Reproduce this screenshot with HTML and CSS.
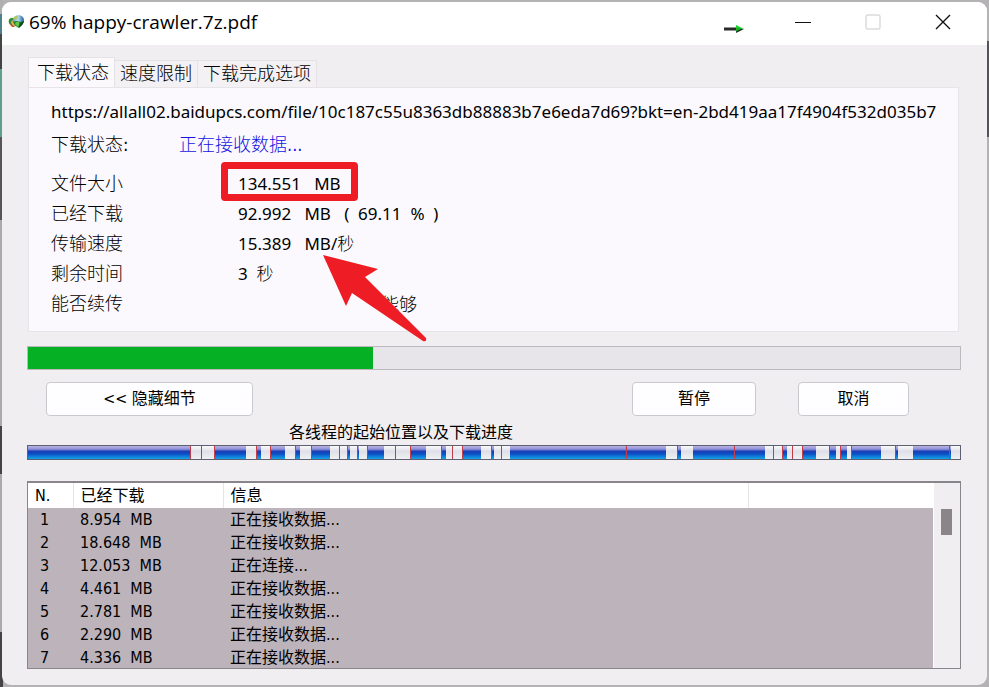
FILE: index.html
```html
<!DOCTYPE html>
<html lang="zh-CN">
<head>
<meta charset="utf-8">
<title>69% happy-crawler.7z.pdf</title>
<link rel="stylesheet" href="styles.css">
</head>
<body>
<main class="window">
  <header class="titlebar">
    <svg class="app-icon" viewBox="0 0 16 16" aria-hidden="true">
      <defs>
        <linearGradient id="globe" x1="0" y1="0" x2="1" y2="0">
          <stop offset="0" stop-color="#5f9fd8"/>
          <stop offset="0.45" stop-color="#b9dcf2"/>
          <stop offset="1" stop-color="#1e5a9c"/>
        </linearGradient>
      </defs>
      <ellipse cx="5" cy="8.500" rx="4.500" ry="3.500" fill="#8a9a4c" transform="rotate(35 5 8.500)"/>
      <path d="M1 8Q0 5 3 4Q5 3 6 5L3 7Q3 10 6 12Q2 12 1 8Z" fill="#2f8f3a"/>
      <path d="M3 8L6 6L8 9L7 12Q4 12 3 8Z" fill="#e6b04e"/>
      <path d="M1 9L4 11L7 13L4 13Z" fill="#c8521d"/>
      <circle cx="10.500" cy="6.500" r="5.500" fill="url(#globe)"/>
      <path d="M5 5Q6 2 9 1.500L10 3L8 6Z" fill="#b5c45a"/>
      <path d="M5 7.500L9 7L12 8L16 7Q15 11 10.500 14Q6 11 5 7.500Z" fill="#237f2c"/>
      <path d="M8 8H11V11L10 13L7 10Z" fill="#5fc94e"/>
      <path d="M13 8L16 7Q15 11 11 14L11.500 11Z" fill="#114a1c"/>
    </svg>
    <h1 class="title">69% happy-crawler.7z.pdf</h1>
    <svg class="drop-arrow" viewBox="0 0 20 10" aria-hidden="true">
      <path d="M0 3.500H13V6.500H0Z" fill="#2a2a2a"/>
      <path d="M12 1L20 5H12Z" fill="#19d326"/>
      <path d="M12 4H17L12 8Z" fill="#19b326"/>
      <path d="M20 5L12 9V7.500L16 5Z" fill="#143617"/>
    </svg>
    <button class="caption" type="button" aria-label="最小化"><svg viewBox="0 0 16 16"><path d="M0 8.500H16" stroke="#111"/></svg></button>
    <button class="caption" type="button" aria-label="最大化" disabled><svg viewBox="0 0 16 16"><rect x="1" y="1" width="14" height="14" rx="1" fill="none" stroke="#c9c9c9"/></svg></button>
    <button class="caption" type="button" aria-label="关闭"><svg viewBox="0 0 16 16"><path d="M1 1L15 15M15 1L1 15" stroke="#111" stroke-width="1.400"/></svg></button>
  </header>

  <div class="content">
    <div class="tabs" role="tablist">
      <button class="tab tab-active" type="button" role="tab" aria-selected="true">下载状态</button>
      <button class="tab" type="button" role="tab" aria-selected="false">速度限制</button>
      <button class="tab" type="button" role="tab" aria-selected="false">下载完成选项</button>
    </div>

    <section class="panel" role="tabpanel">
      <p class="url">https://allall02.baidupcs.com/file/10c187c55u8363db88883b7e6eda7d69?bkt=en-2bd419aa17f4904f532d035b7</p>
      <p class="status"><span class="status-label">下载状态:</span><span class="status-value">正在接收数据...</span></p>
      <dl class="details">
        <dt>文件大小</dt><dd>134.551&nbsp;&nbsp; MB<span class="frame"></span></dd>
        <dt>已经下载</dt><dd>92.992&nbsp;&nbsp; MB&nbsp;&nbsp; (&nbsp; 69.11&nbsp; %&nbsp; )</dd>
        <dt>传输速度</dt><dd>15.389&nbsp;&nbsp; MB/<span class="unit">秒</span></dd>
        <dt>剩余时间</dt><dd>3&nbsp; <span class="unit">秒</span></dd>
        <dt>能否续传</dt><dd class="resume">能够</dd>
      </dl>
      <svg class="pointer" viewBox="0 0 104 88" aria-hidden="true">
        <path d="M0 0L55 14L42 22L103 83Q104 87 100 86L29 38L23 51Z" fill="#ee1c24"/>
      </svg>
    </section>

    <div class="progress" role="progressbar" aria-label="下载进度" aria-valuenow="69"><div class="progress-fill"></div></div>

    <div class="actions">
      <button class="button button-details" type="button">&lt;&lt; 隐藏细节</button>
      <button class="button button-pause" type="button">暂停</button>
      <button class="button button-cancel" type="button">取消</button>
    </div>

    <p class="threads-label">各线程的起始位置以及下载进度</p>
    <svg class="threads" viewBox="28 0 932 13" preserveAspectRatio="none" shape-rendering="crispEdges" aria-hidden="true">
      <defs>
        <linearGradient id="done" x1="0" y1="0" x2="0" y2="1">
          <stop offset="0" stop-color="#b9b2e2"/>
          <stop offset="0.25" stop-color="#8e90da"/>
          <stop offset="0.4" stop-color="#1b3cb4"/>
          <stop offset="0.6" stop-color="#0b4fc4"/>
          <stop offset="1" stop-color="#15a4ea"/>
        </linearGradient>
        <linearGradient id="empty" x1="0" y1="0" x2="0" y2="1">
          <stop offset="0" stop-color="#fafafa"/>
          <stop offset="0.4" stop-color="#dfe0e8"/>
          <stop offset="1" stop-color="#eef0f3"/>
        </linearGradient>
      </defs>
      <rect x="28" width="932" height="13" fill="url(#empty)"/>
      <path fill="url(#done)" d="M28 0H190V13H28ZM215 0H246V13H215ZM257 0H261V13H257ZM271 0H285V13H271ZM296 0H300V13H296ZM312 0H330V13H312ZM348 0H350V13H348ZM358 0H359V13H358ZM368 0H384V13H368ZM411 0H426V13H411ZM442 0H446V13H442ZM463 0H481V13H463ZM492 0H494V13H492ZM510 0H666V13H510ZM678 0H681V13H678ZM693 0H765V13H693ZM783 0H787V13H783ZM803 0H816V13H803ZM830 0H836V13H830ZM841 0H847V13H841ZM852 0H881V13H852ZM896 0H898V13H896ZM913 0H951V13H913Z"/>
      <path fill="#c43c48" d="M190 0h1v13h-1zM201 0h1v13h-1zM214 0h1v13h-1zM256 0h1v13h-1zM270 0h1v13h-1zM295 0h1v13h-1zM311 0h1v13h-1zM339 0h1v13h-1zM347 0h1v13h-1zM357 0h1v13h-1zM367 0h1v13h-1zM395 0h1v13h-1zM410 0h1v13h-1zM441 0h1v13h-1zM452 0h1v13h-1zM462 0h1v13h-1zM491 0h1v13h-1zM501 0h1v13h-1zM626 0h1v13h-1zM677 0h1v13h-1zM734 0h1v13h-1zM773 0h1v13h-1zM782 0h1v13h-1zM792 0h1v13h-1zM802 0h1v13h-1zM829 0h1v13h-1zM840 0h1v13h-1zM851 0h1v13h-1zM895 0h1v13h-1zM949 0h1v13h-1z"/>
    </svg>

    <div class="list">
      <table class="connections">
        <colgroup><col class="col-number"><col class="col-size"><col class="col-info"><col></colgroup>
        <thead><tr><th>N.</th><th>已经下载</th><th>信息</th><th></th></tr></thead>
        <tbody>
          <tr><td>1</td><td>8.954&nbsp; MB</td><td>正在接收数据...</td><td></td></tr>
          <tr><td>2</td><td>18.648&nbsp; MB</td><td>正在接收数据...</td><td></td></tr>
          <tr><td>3</td><td>12.053&nbsp; MB</td><td>正在连接...</td><td></td></tr>
          <tr><td>4</td><td>4.461&nbsp; MB</td><td>正在接收数据...</td><td></td></tr>
          <tr><td>5</td><td>2.781&nbsp; MB</td><td>正在接收数据...</td><td></td></tr>
          <tr><td>6</td><td>2.290&nbsp; MB</td><td>正在接收数据...</td><td></td></tr>
          <tr><td>7</td><td>4.336&nbsp; MB</td><td>正在接收数据...</td><td></td></tr>
        </tbody>
      </table>
      <div class="scrollbar"><div class="thumb"></div></div>
    </div>
  </div>
</main>
</body>
</html>
```
FILE: styles.css
```css
* { box-sizing: border-box; }

body {
  margin: 0;
  min-height: 100vh;
  padding: 2px;
  background:
    linear-gradient(#b0b0b0 2%, #4d8088 2% 5%, #444 5% 10%, #5fa08c 10% 20%, #555 20% 32%, #aaa 32% 62%, #444 62% 69%, #aaa 69% 92%, #444 92%) left / 3px 100% no-repeat,
    linear-gradient(#b4b2b4 6%, #55535a 6% 20%, #b4b2b4 20%) right / 3px 100% no-repeat,
    #b4b2b4;
  color: #000;
  font: 16px/24px "DejaVu Sans Condensed", "Noto Sans CJK SC", sans-serif;
}

h1, p, dl, dd { margin: 0; }

button {
  font: inherit;
  color: inherit;
}

.window {
  min-height: calc(100vh - 4px);
  border-radius: 9px;
  background: #f0eef1;
  overflow: hidden;
}

.titlebar {
  display: flex;
  align-items: center;
  height: 43px;
  padding: 0 9px 3px 6px;
  background: #fff;
}

.app-icon { width: 16px; height: 16px; }

.title {
  flex: 1;
  margin-left: 5px;
  font: 400 19px/24px "Open Sans", "Noto Sans", sans-serif;
}

.drop-arrow {
  width: 20px;
  height: 10px;
  margin: 14px 24px 0 0;
}

.caption {
  display: grid;
  place-items: center;
  width: 70px;
  height: 40px;
  padding: 0;
  border: 0;
  background: none;
}

.caption svg { width: 16px; height: 16px; }

.content { padding: 12px 26px 16px 25px; }

.tabs {
  display: flex;
  align-items: flex-end;
  padding-left: 1px;
}

.tab {
  height: 27px;
  padding: 0 5px;
  border: solid #e4e2e5;
  border-width: 1px 1px 0 0;
  background: #f3f1f4;
  font-size: 18px;
  font-weight: 300;
  line-height: 24px;
}

.tab-active {
  height: 30px;
  padding: 0 5px 0 8px;
  border-left-width: 1px;
  background: #fbf9fc;
}

.panel {
  position: relative;
  height: 245px;
  margin: 0 2px 0 1px;
  padding: 12px 19px 0 22px;
  border: 1px solid #e6e4e7;
  background: #fbf9fd;
}

.url {
  overflow: hidden;
  font: 400 17px/24px "Noto Sans", sans-serif;
  white-space: nowrap;
}

.status {
  display: flex;
  margin-top: 9px;
  font-size: 18px;
  font-weight: 300;
}

.status-label { width: 128px; }
.status-value { color: #1414e0; }

.details {
  display: grid;
  grid-template-columns: 187px 1fr;
  margin-top: 12px;
  font-size: 18px;
  font-weight: 300;
  line-height: 30px;
}

.details dd {
  position: relative;
  font: 400 17px/30px "Noto Sans", "Noto Sans CJK SC", sans-serif;
}

.details .unit { font-weight: 300; }

.details .resume {
  padding-left: 143px;
  font-size: 18px;
  font-weight: 300;
}

.frame {
  position: absolute;
  top: -7px;
  left: -17px;
  width: 137px;
  height: 39px;
  border: 7px solid #ee1c24;
  border-radius: 4px;
}

.pointer {
  position: absolute;
  top: 167px;
  left: 294px;
  width: 104px;
  height: 88px;
  z-index: 1;
}

.progress {
  height: 24px;
  margin-top: 14px;
  border: 1px solid #bbb9bd;
  background: #e8e5ea;
}

.progress-fill {
  width: 37%;
  height: 100%;
  background: #06b025;
}

.actions {
  display: flex;
  margin: 12px 52px 0 19px;
}

.button {
  height: 34px;
  padding: 0;
  border: 1px solid #cbc9cd;
  border-radius: 4px;
  background: #fefdff;
}

.button-details { width: 207px; margin-right: auto; }
.button-pause { width: 124px; margin-right: 42px; }
.button-cancel { width: 111px; }

.threads-label {
  margin: 5px 0 0 262px;
}

.threads {
  display: block;
  width: 100%;
  height: 15px;
  border: 1px solid #5c6070;
}

.list {
  display: flex;
  height: 188px;
  margin-top: 21px;
  border: solid #88868a;
  border-width: 2px 1px 1px;
  background: #bcb3bb;
  overflow: hidden;
}

.connections {
  flex: 1;
  table-layout: fixed;
  border-collapse: collapse;
  height: 186px;
}

.col-number { width: 45px; }
.col-size { width: 150px; }
.col-info { width: 525px; }

.connections th {
  height: 25px;
  padding: 1px 7px 0;
  border-right: 1px solid #e5e5e5;
  background: #fff;
  font-weight: 400;
  text-align: left;
}

.connections th:last-child { border-right: 0; }

.connections td {
  height: 23px;
  padding: 1px 7px 0;
  line-height: 22px;
}

.connections td:first-child { padding-left: 12px; }

.scrollbar {
  width: 27px;
  padding: 26px 7px;
  border-left: 1px solid #fff;
  background: #f1eef1;
}

.thumb {
  width: 11px;
  height: 26px;
  background: #898589;
}
```
